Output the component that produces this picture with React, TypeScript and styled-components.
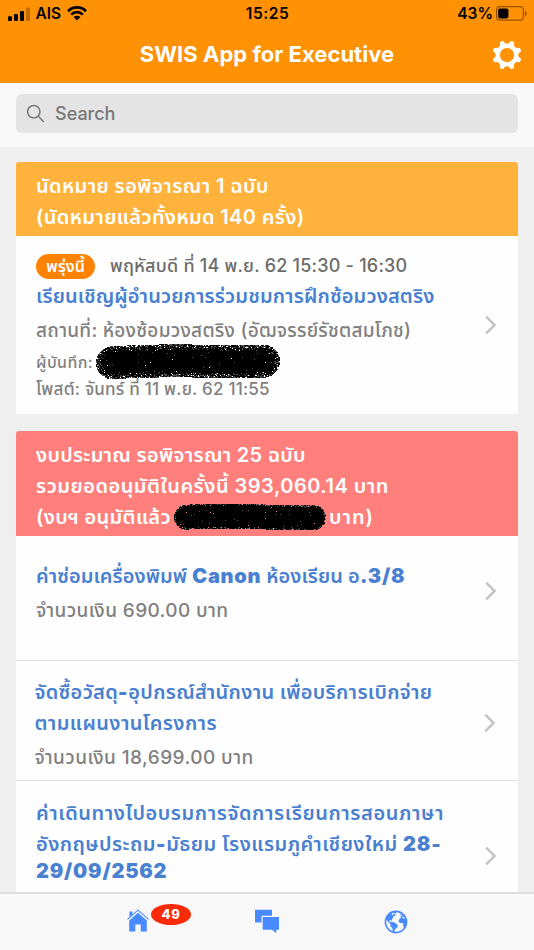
import React from "react";
import styled, { createGlobalStyle } from "styled-components";
import { IoIosSearch } from "react-icons/io";
import { IoEarth } from "react-icons/io5";

const Global = createGlobalStyle`
  * { box-sizing: border-box; }
  html, body { margin: 0; padding: 0; }
  body {
    font-family: Inter, "Noto Sans Thai", "Noto Sans", "Liberation Sans", sans-serif;
    background: #efeff0;
    overflow: hidden;
  }
`;

const Screen = styled.div`
  width: 534px;
  height: 950px;
  display: flex;
  flex-direction: column;
  overflow: hidden;
`;

const Header = styled.header`
  flex: none;
  height: 83px;
  background: #ff9104;
`;

const StatusBar = styled.div`
  display: grid;
  grid-template-columns: 1fr auto 1fr;
  align-items: center;
  height: 26px;
  padding: 1px 7px 0 8px;
  color: #000;
  font-size: 15.5px;
  line-height: 25px;
  font-weight: 600;
`;

const StatusGroup = styled.div<{ $end?: boolean }>`
  display: flex;
  align-items: center;
  justify-content: ${(p) => (p.$end ? "flex-end" : "flex-start")};
  gap: ${(p) => (p.$end ? 3 : 5.5)}px;
`;

const Clock = styled.span`
  letter-spacing: 0.55px;
`;

const TitleBar = styled.div`
  display: grid;
  grid-template-columns: 42px 1fr 42px;
  align-items: center;
  height: 57px;
`;

const Title = styled.h1`
  margin: 0;
  color: #fff;
  font-size: 22px;
  line-height: 57px;
  font-weight: 700;
  letter-spacing: 0.03px;
  text-align: center;
  white-space: nowrap;
`;

const SearchBar = styled.div`
  flex: none;
  height: 65px;
  padding: 11px 16px 0;
  background: #f8f8f8;
  border-bottom: 1px solid #f0f0f0;
`;

const SearchField = styled.div`
  display: flex;
  align-items: center;
  gap: 8px;
  height: 39px;
  padding-left: 8px;
  border-radius: 6px;
  background: #e4e4e4;
  color: #777;
  font-size: 18px;
  font-weight: 500;
`;

const Content = styled.main`
  flex: 1;
  min-height: 0;
  overflow: hidden;
  display: flex;
  flex-direction: column;
  gap: 17px;
  padding: 14px 16px 0 15.5px;
`;

const Card = styled.section`
  flex: none;
  border-radius: 3px 3px 0 0;
  background: #fefefe;
  overflow: hidden;
`;

const CardHead = styled.div<{ $color: string; $height: number }>`
  height: ${(p) => p.$height}px;
  padding: 9px 20.5px 0;
  background: ${(p) => p.$color};
  color: #fff;
`;

const Row = styled.div<{ $height: number; $pad: number; $left?: number; $line?: boolean }>`
  display: flex;
  justify-content: space-between;
  height: ${(p) => p.$height}px;
  padding-left: ${(p) => p.$left ?? 20.5}px;
  padding-top: ${(p) => p.$pad}px;
  border-top: ${(p) => (p.$line ? "1px solid #e2e2e3" : "0")};
`;

const Line = styled.div<{
  $size?: number;
  $h?: number;
  $w?: number;
  $ls?: number;
  $color?: string;
}>`
  display: flex;
  align-items: center;
  height: ${(p) => p.$h ?? 31}px;
  font-size: ${(p) => p.$size ?? 20}px;
  line-height: ${(p) => p.$h ?? 31}px;
  font-weight: ${(p) => p.$w ?? 600};
  letter-spacing: ${(p) => p.$ls ?? 0}px;
  color: ${(p) => p.$color ?? "inherit"};
  white-space: pre;
`;

const Heavy = styled.b<{ $ls?: number }>`
  font-weight: 900;
  letter-spacing: ${(p) => p.$ls ?? 0.8}px;
`;

const Pill = styled.span`
  flex: none;
  width: 59px;
  height: 25px;
  margin-right: 15px;
  border-radius: 13px;
  background: #ff8200;
  color: #fff;
  font-size: 16px;
  line-height: 24px;
  font-weight: 600;
  letter-spacing: 0;
  text-align: center;
`;

const ChevronBox = styled.div<{ $top: number; $right?: number }>`
  flex: none;
  height: 20px;
  margin-top: ${(p) => p.$top}px;
  margin-right: ${(p) => p.$right ?? 21}px;
`;

const TabBar = styled.nav`
  flex: none;
  display: grid;
  grid-template-columns: 129px 129px 129px;
  justify-content: center;
  height: 58px;
  border-top: 2px solid #dededf;
  background: #f8f8f8;
  color: #488aff;
`;

const Tab = styled.div`
  position: relative;
  display: flex;
  justify-content: center;
  padding-top: 15px;
`;

const Badge = styled.span`
  position: absolute;
  left: 77.5px;
  top: 10px;
  width: 40px;
  height: 21px;
  border-radius: 50%;
  background: #fb2a08;
  color: #fff;
  font-size: 13px;
  line-height: 21px;
  font-weight: 800;
  letter-spacing: 0.8px;
  text-align: center;
`;

const ScribbleBox = styled.div<{ $gap: number }>`
  flex: none;
  display: flex;
  margin: -8px ${(p) => p.$gap}px -6px;
`;

const BLUE = "#4a80d0";
const GREY = "#808080";

/** Ink blot with a grainy rim, one unit square per speck. */
function Scribble({ w, h, r, grain, seed }: { w: number; h: number; r: number; grain: number; seed: number }) {
  let s = seed;
  const rnd = () => {
    s = (s * 16807) % 2147483647;
    return s / 2147483647;
  };
  let black = "";
  let pale = "";
  for (let y = 0; y < h; y++) {
    for (let x = 0; x < w; x++) {
      const mid = h / 2 + Math.sin((x / w) * 6.28 + 2.5) * 0.9 - (x / w - 0.5) * (r > 15 ? 2.5 : 0);
      const cx = Math.min(Math.max(x + 0.5, r), w - r);
      const d = r - Math.hypot(x + 0.5 - cx, y + 0.5 - mid);
      if (d <= 0) continue;
      const p = Math.min(0.99, 0.5 + d / grain);
      if (rnd() < p) black += `M${x} ${y}h1v1h-1z`;
      else if (rnd() < 0.75) pale += `M${x} ${y}h1v1h-1z`;
    }
  }
  return (
    <svg width={w} height={h} viewBox={`0 0 ${w} ${h}`}>
      <path d={pale} fill="#555" />
      <path d={black} fill="#000" />
    </svg>
  );
}

function Chevron() {
  return (
    <svg width="12" height="20" viewBox="0 0 12 20" fill="none" stroke="#c4c4c8" strokeWidth="2.5">
      <path d="M1.2 1.7 9.6 10l-8.4 8.3" />
    </svg>
  );
}

function Signal() {
  return (
    <svg width="22" height="14" viewBox="0 0 22 14">
      <rect x="0" y="9.3" width="4" height="4.7" rx="1" />
      <rect x="6" y="7" width="4" height="7" rx="1" />
      <rect x="12" y="4" width="4" height="10" rx="1" />
      <rect x="18" y="0.5" width="4" height="13.5" rx="1" fillOpacity="0.25" />
    </svg>
  );
}

function Wifi() {
  return (
    <svg width="20" height="15" viewBox="0 0 20 15" fill="none" stroke="#000" strokeWidth="2.7">
      <path d="M1 5.2a12.7 12.7 0 0 1 18 0" />
      <path d="M4.2 8.6a8.2 8.2 0 0 1 11.6 0" />
      <path d="M6.6 11.1a4.8 4.8 0 0 1 6.8 0L10 14.5z" fill="#000" stroke="none" />
    </svg>
  );
}

function Battery() {
  return (
    <svg width="31" height="15" viewBox="0 0 31 15">
      <rect x="0.6" y="0.6" width="26.8" height="13.6" rx="3.4" fill="none" stroke="#000" strokeOpacity="0.42" strokeWidth="1.2" />
      <rect x="2.2" y="2.4" width="10.2" height="10" rx="1.8" />
      <path d="M29 5v5c1.2-.5 1.7-1.4 1.7-2.5S30.2 5.5 29 5z" fillOpacity="0.45" />
    </svg>
  );
}

function gearPath() {
  const pt = (r: number, deg: number) => {
    const a = (deg * Math.PI) / 180;
    return `${(16 + r * Math.cos(a)).toFixed(2)} ${(16 + r * Math.sin(a)).toFixed(2)}`;
  };
  let d = "";
  for (let i = 0; i < 8; i++) {
    const c = i * 45 + 22.5;
    d += `${i ? "L" : "M"}${pt(14.8, c - 8.5)}Q${pt(15.9, c - 7)} ${pt(15.7, c - 3)}L${pt(15.7, c + 3)}Q${pt(15.9, c + 7)} ${pt(14.8, c + 8.5)}C${pt(11.4, c + 13)} ${pt(11.4, c + 32)} ${pt(14.8, c + 36.5)}`;
  }
  return d + "ZM23.6 16a7.6 7.6 0 1 0-15.2 0a7.6 7.6 0 1 0 15.2 0z";
}

function Gear() {
  return (
    <svg width="30" height="32" viewBox="0 0 32 32" fill="#fff" fillRule="evenodd">
      <path d={gearPath()} />
    </svg>
  );
}

function Home() {
  return (
    <svg width="22" height="23" viewBox="0 0 22 23" fill="currentColor">
      <path d="M2.5 2.5H5.5v3L2.5 8z" />
      <path d="M0.5 10.3 11 1.2l10.5 9.1" fill="none" stroke="currentColor" strokeWidth="1.1" />
      <path d="M2.2 11.4 11 3.8l8.8 7.6V22.500H13.700V15.500H8.300V22.500H2.200z" />
    </svg>
  );
}

function Chat() {
  return (
    <svg width="24" height="24" viewBox="0 0 24 24" fill="currentColor">
      <path d="M0 0.700h17v6.100H6.500V13.500H0z" />
      <path d="M7.700 8H24V20.700H21.200V24.200L17 20.700H7.700z" />
    </svg>
  );
}

export default function App() {
  return (
    <Screen>
      <Global />
      <Header>
        <StatusBar>
          <StatusGroup>
            <Signal />
            <span>AIS</span>
            <Wifi />
          </StatusGroup>
          <Clock>15:25</Clock>
          <StatusGroup $end>
            <span>43%</span>
            <Battery />
          </StatusGroup>
        </StatusBar>
        <TitleBar>
          <span />
          <Title>SWIS App for Executive</Title>
          <Gear />
        </TitleBar>
      </Header>
      <SearchBar>
        <SearchField>
          <IoIosSearch size={23} />
          <span>Search</span>
        </SearchField>
      </SearchBar>
      <Content>
        <Card>
          <CardHead $color="#ffb23c" $height={74}>
            <Line $ls={0.4}>นัดหมาย รอพิจารณา 1 ฉบับ</Line>
            <Line $ls={0.36}>(นัดหมายแล้วทั้งหมด 140 ครั้ง)</Line>
          </CardHead>
          <Row $height={178} $pad={15}>
            <div>
              <Line $size={18} $h={30} $w={500} $ls={0.22} $color="#6c6c6c">
                <Pill>พรุ่งนี้</Pill>
                พฤหัสบดี ที่ 14 พ.ย. 62 15:30 - 16:30
              </Line>
              <Line $ls={0.12} $color={BLUE}>เรียนเชิญผู้อำนวยการร่วมชมการฝึกซ้อมวงสตริง</Line>
              <Line $size={19} $h={37} $w={500} $ls={0.26} $color={GREY}>สถานที่: ห้องซ้อมวงสตริง (อัฒจรรย์รัชตสมโภช)</Line>
              <Line $size={16} $h={26} $w={500} $ls={0.38} $color={GREY}>
                ผู้บันทึก:
                <ScribbleBox $gap={3}><Scribble w={184} h={35} r={16.5} grain={13} seed={77} /></ScribbleBox>
              </Line>
              <Line $size={17} $h={28} $w={500} $ls={0.22} $color={GREY}>โพสต์: จันทร์ ที่ 11 พ.ย. 62 11:55</Line>
            </div>
            <ChevronBox $top={64}><Chevron /></ChevronBox>
          </Row>
        </Card>
        <Card>
          <CardHead $color="#ff7f7d" $height={105}>
            <Line $ls={0.28}>งบประมาณ รอพิจารณา 25 ฉบับ</Line>
            <Line $ls={0.5}>รวมยอดอนุมัติในครั้งนี้ 393,060.14 บาท</Line>
            <Line $ls={0.34}>
              (งบฯ อนุมัติแล้ว
              <ScribbleBox $gap={3}><Scribble w={152} h={28} r={12.5} grain={5} seed={991} /></ScribbleBox>
              <Line as="span" $ls={1}>บาท)</Line>
            </Line>
          </CardHead>
          <Row $height={124} $pad={24}>
            <div>
              <Line $h={33} $ls={0.05} $color={BLUE}>ค่าซ่อมเครื่องพิมพ์ <Heavy $ls={0.7}>Canon</Heavy> ห้องเรียน อ<Heavy>.3/8</Heavy></Line>
              <Line $size={19} $h={35} $w={500} $ls={0.38} $color={GREY}>จำนวนเงิน 690.00 บาท</Line>
            </div>
            <ChevronBox $top={21}><Chevron /></ChevronBox>
          </Row>
          <Row $height={120} $pad={16} $left={19} $line>
            <div>
              <Line $ls={0.3} $color={BLUE}>จัดซื้อวัสดุ<Heavy>-</Heavy>อุปกรณ์สำนักงาน เพื่อบริการเบิกจ่าย</Line>
              <Line $ls={0.4} $color={BLUE}>ตามแผนงานโครงการ</Line>
              <Line $size={19} $h={37} $w={500} $ls={0.44} $color={GREY}>จำนวนเงิน 18,699.00 บาท</Line>
            </div>
            <ChevronBox $top={36} $right={22.5}><Chevron /></ChevronBox>
          </Row>
          <Row $height={120} $pad={17} $line>
            <div>
              <Line $ls={0.57} $color={BLUE}>ค่าเดินทางไปอบรมการจัดการเรียนการสอนภาษา</Line>
              <Line $h={30} $ls={0.45} $color={BLUE}>อังกฤษประถม<Heavy>-</Heavy>มัธยม โรงแรมภูคำเชียงใหม่ <Heavy>28-</Heavy></Line>
              <Line $h={24} $color={BLUE}><Heavy>29/09/2562</Heavy></Line>
            </div>
            <ChevronBox $top={48}><Chevron /></ChevronBox>
          </Row>
        </Card>
      </Content>
      <TabBar>
        <Tab>
          <Home />
          <Badge>49</Badge>
        </Tab>
        <Tab><Chat /></Tab>
        <Tab><IoEarth size={26} /></Tab>
      </TabBar>
    </Screen>
  );
}
